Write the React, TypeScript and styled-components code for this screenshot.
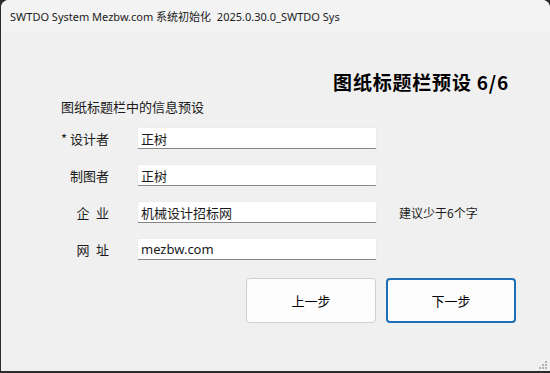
import styled, {createGlobalStyle} from "styled-components";

const GlobalStyle = createGlobalStyle`
    html, body {
        margin: 0;
        padding: 0;
        background: #2b2b2b;
    }
    body {
        font-family: "Noto Sans", "Noto Sans CJK SC", sans-serif;
        color: #1a1a1a;
    }
`;

const fields = [
    {label: '* 设计者', value: '正树'},
    {label: '制图者', value: '正树'},
    {label: '企\u2002业', value: '机械设计招标网', hint: '建议少于6个字'},
    {label: '网\u2002址', value: 'mezbw.com'},
];

/**
 * The setup wizard page: title bar preset, step 6 of 6.
 */
const App = () => {
    return <>
        <GlobalStyle />
        <Window>
            <TitleBar>SWTDO System Mezbw.com 系统初始化&nbsp; 2025.0.30.0_SWTDO Sys</TitleBar>
            <Body>
                <Heading>图纸标题栏预设 6/6</Heading>
                <SubTitle>图纸标题栏中的信息预设</SubTitle>
                <Form>
                    {fields.map((f, i) => <Row key={i}>
                        <Label>{f.label}</Label>
                        <Input defaultValue={f.value} />
                        {f.hint && <Hint>{f.hint}</Hint>}
                    </Row>)}
                </Form>
                <Buttons>
                    <Button>上一步</Button>
                    <Button $primary>下一步</Button>
                </Buttons>
                <Grip>
                    <svg width="10" height="10" viewBox="0 0 10 10">
                        {[[8, 2], [8, 5], [5, 5], [8, 8], [5, 8], [2, 8]].map(([x, y], i) =>
                            <rect key={i} x={x - 1} y={y - 1} width="2" height="2" fill="#b4b4b4" />)}
                    </svg>
                </Grip>
            </Body>
        </Window>
    </>;
};

export default App;

const Window = styled.div`
    width: 549px;
    height: 371px;
    margin-left: 1px;
    border-radius: 8px 8px 0 0;
    background: #f0f0f0;
    overflow: hidden;
    display: flex;
    flex-direction: column;
`;

const TitleBar = styled.div`
    height: 31px;
    flex: none;
    background: #f3f3f3;
    padding-left: 9px;
    display: flex;
    align-items: center;
    font-size: 11px;
    color: #1b1b1b;
    white-space: nowrap;
`;

const Body = styled.div`
    position: relative;
    flex: 1;
    display: flex;
    flex-direction: column;
`;

const Heading = styled.div`
    margin-top: 40px;
    padding-right: 41px;
    text-align: right;
    font-family: "Noto Sans CJK SC", sans-serif;
    font-weight: bold;
    font-size: 19px;
    line-height: 22px;
    letter-spacing: 0.8px;
    color: #000;
`;

const SubTitle = styled.div`
    margin-top: 5px;
    padding-left: 60px;
    font-family: "Noto Sans CJK SC", sans-serif;
    font-size: 13px;
    line-height: 18px;
`;

const Form = styled.div`
    margin-top: 11px;
    padding-left: 60px;
    display: flex;
    flex-direction: column;
    gap: 15px;
`;

const Row = styled.div`
    display: flex;
    align-items: center;
    height: 22px;
`;

const Label = styled.div`
    width: 48px;
    text-align: right;
    white-space: nowrap;
    font-family: "Noto Sans CJK SC", sans-serif;
    font-size: 13px;
    margin-right: 28px;
`;

const Input = styled.input`
    box-sizing: border-box;
    width: 240px;
    height: 22px;
    padding: 0 3px;
    border: 1px solid #ececec;
    border-bottom: 1px solid #868686;
    border-radius: 2px;
    background: #fff;
    font-family: "Noto Sans", "Noto Sans CJK SC", sans-serif;
    font-size: 13px;
    color: #1a1a1a;
    outline: none;
`;

const Hint = styled.div`
    margin-left: 22px;
    font-family: "Noto Sans CJK SC", sans-serif;
    font-size: 12px;
`;

const Buttons = styled.div`
    margin-top: 18px;
    padding-right: 34px;
    display: flex;
    justify-content: flex-end;
    gap: 10px;
`;

const Button = styled.button<{$primary?: boolean}>`
    box-sizing: border-box;
    width: 130px;
    height: 45px;
    border-radius: 4px;
    background: #fdfdfd;
    border: ${props => props.$primary ? '2px solid #1f6fb5' : '1px solid #cfcfcf'};
    font-family: "Noto Sans CJK SC", sans-serif;
    font-size: 13px;
    color: #000;
`;

const Grip = styled.div`
    position: absolute;
    right: 2px;
    bottom: 1px;
    line-height: 0;
`;
